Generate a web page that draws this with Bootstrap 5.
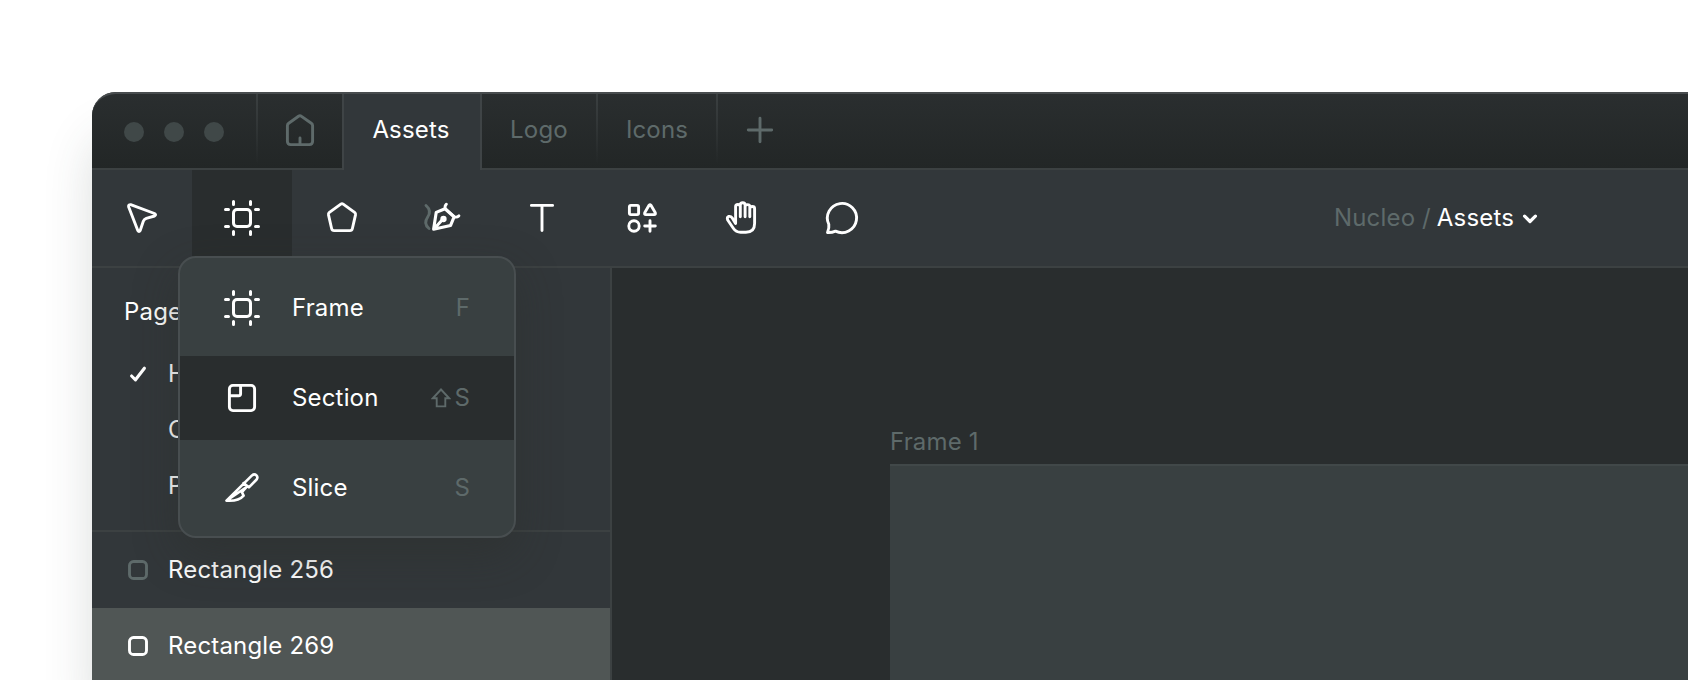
<!DOCTYPE html>
<html lang="en">
<head>
<meta charset="utf-8">
<title>Assets</title>
<meta name="viewport" content="width=device-width, initial-scale=1">
<link href="https://cdn.jsdelivr.net/npm/bootstrap@5.3.0/dist/css/bootstrap.min.css" rel="stylesheet">
<style>
  body { font-family: Inter, "Liberation Sans", sans-serif; font-size: 24px; font-weight: 400; line-height: 32px; background: #fff; color: #fff; letter-spacing: .17px; }
  svg { display: block; fill: none; stroke: currentColor; stroke-width: 2.9; stroke-linecap: round; stroke-linejoin: round; flex: none; }
  .stage { height: 680px; padding: 92px 0 0 92px; }
  .app-window { height: 592px; border-top-left-radius: 24px; background: #292d2e; box-shadow: 0 44px 52px -4px rgba(50,66,62,.2); }
  .dim { color: #5e6a6a; }
  .titlebar { height: 78px; border-top: 2px solid #484c4e; background: linear-gradient(#2a2e2f, #222626); border-top-left-radius: 24px; }
  .tab { border-bottom: 2px solid #3c4142; position: relative; padding-bottom: 2px; }
  .lights { width: 166px; padding: 2px 0 0 32px; gap: 20px; }
  .light { width: 20px; height: 20px; border-radius: 50%; background: #404848; }
  .tab-home { width: 84px; }
  .tab-assets { width: 140px; padding-right: 2px; }
  .tab-logo { width: 116px; padding-right: 2px; }
  .tab-icons { width: 120px; padding-right: 2px; }
  .tab-new { padding-left: 18px; }
  .tab-fade::after { content: ""; position: absolute; right: 0; top: 0; width: 2px; height: 70px; background: linear-gradient(#3a3f40, rgba(58,63,64,0)); }
  .tab-on { background: #32373a; border-left: 2px solid #3f4446; border-right: 2px solid #3f4446; border-bottom: 0; padding-bottom: 4px; }
  .toolbar { height: 98px; background: #32373a; border-bottom: 2px solid #3c4142; }
  .tool { width: 100px; }
  .tool.active { background: #292d2e; }
  .crumbs { width: 354px; }
  .crumbs .current { margin-left: -1px; }
  .crumbs svg { margin-left: 7px; }
  .side { width: 520px; background: #32373a; border-right: 2px solid #3c4142; }
  .pages { height: 264px; border-bottom: 2px solid #3c4142; padding: 28px 32px 0; }
  .title-row { margin-bottom: 18px; }
  .page-row { height: 56px; }
  .mark-col { width: 44px; }
  .layer { height: 76px; padding-left: 36px; gap: 20px; }
  .layer.active { background: #505655; }
  .frame-label { padding: 158px 0 6px 278px; }
  .artboard { margin-left: 278px; background: #394041; border-top: 2px solid #414849; }
  .frame-menu { left: 178px; top: 256px; width: 338px; height: 282px; background: #394041; border: 2px solid #484e50; border-radius: 18px; padding: 8px 0 6px; box-shadow: 0 16px 44px rgba(42,46,40,.42); gap: 6px; }
  .menu-line { height: 84px; padding: 0 44px 0 38px; flex: none; }
  .menu-line.active { background: #292d2e; }
  .menu-line .ico { margin-right: 26px; }
  .keys { gap: 3px; }
</style>
</head>
<body class="overflow-hidden">
<svg width="0" height="0" class="position-absolute">
  <symbol id="frame" viewBox="0 0 48 48"><g stroke-width="3"><rect x="15.5" y="15.5" width="17" height="17" rx="3.500"/><path d="M15.500 7.500v3M32.500 7.500v3M15.500 37.500v3M32.500 37.500v3M7.500 15.500h3M7.500 32.500h3M37.500 15.500h3M37.500 32.500h3"/></g></symbol>
</svg>
<div class="stage">
  <main class="app-window d-flex flex-column">
    <header class="titlebar d-flex flex-shrink-0">
      <div class="tab lights tab-fade d-flex align-items-center flex-shrink-0">
        <span class="light"></span><span class="light"></span><span class="light"></span>
      </div>
      <div class="tab tab-home d-flex align-items-center justify-content-center dim">
        <svg width="48" height="48" viewBox="0 0 48 48"><path d="M11.400 19.800q0-1.600 1.300-2.500l9.800-7q1.500-1.100 3 0l9.800 7q1.300.9 1.300 2.500v15.500q0 3.300-3.300 3.300H14.700q-3.300 0-3.300-3.300zM24 32v5.500"/></svg>
      </div>
      <div class="tab tab-on tab-assets d-flex align-items-center justify-content-center">Assets</div>
      <div class="tab tab-fade tab-logo d-flex align-items-center justify-content-center dim">Logo</div>
      <div class="tab tab-fade tab-icons d-flex align-items-center justify-content-center dim">Icons</div>
      <div class="tab tab-new flex-grow-1 d-flex align-items-center dim">
        <svg width="48" height="48" viewBox="0 0 48 48"><path d="M24 12.300v23.400M12.300 24h23.400"/></svg>
      </div>
    </header>
    <nav class="toolbar d-flex align-items-stretch flex-shrink-0">
      <div class="tool d-flex align-items-center justify-content-center"><svg width="48" height="48" viewBox="0 0 48 48"><path d="M12.700 10.600l23.800 8.900q2.200 1.200 0 2.500l-8.200 2.300q-2.200.8-3 3l-3.100 9.200q-1.200 2-2.400 0L10.600 12.700q-.3-2.200 2.100-2.100z"/></svg></div>
      <div class="tool active d-flex align-items-center justify-content-center"><svg width="48" height="48"><use href="#frame"/></svg></div>
      <div class="tool d-flex align-items-center justify-content-center"><svg width="48" height="48" viewBox="0 0 48 48"><path d="M22.800 10.100q1.200-.8 2.400 0l11.400 8.300q1.200 1 .9 2.500l-3.100 13.600q-.5 2.100-2.500 2.100H16.100q-2 0-2.500-2.100l-3.100-13.600q-.3-1.500.9-2.500z"/></svg></div>
      <div class="tool d-flex align-items-center justify-content-center"><svg width="48" height="48" viewBox="0 0 48 48"><path class="dim" d="M8 11.500c4.500 4 4.500 7.500 1.700 11.500s-3 8 1.300 11.500"/><path d="M28.400 10.200q-1.800 1.500-1.200 4.300l9.200 8.300q2.400.9 4.500-1" /><path stroke-width="3.100" d="M27 14.800l-8.800 3.600-2.600 16.900 16.900-3.700 3.600-8.800zM16 35l9-10"/><circle cx="25.500" cy="25" r="1.700"/></svg></div>
      <div class="tool d-flex align-items-center justify-content-center"><svg width="48" height="48" viewBox="0 0 48 48"><path d="M13.400 11.400h21.200M24 11.400v25.200"/></svg></div>
      <div class="tool d-flex align-items-center justify-content-center"><svg width="48" height="48" viewBox="0 0 48 48"><rect x="11.400" y="11.400" width="9.200" height="9.200" rx="1.500"/><path d="M31.200 11.100q.8-1 1.600 0l4.500 7.700q.5 1.800-1.200 1.800h-8.200q-1.700 0-1.200-1.800zM32 26.700v10.600M26.700 32h10.600"/><circle cx="16" cy="32" r="5.200"/></svg></div>
      <div class="tool d-flex align-items-center justify-content-center"><svg width="48" height="48" viewBox="0 0 48 48"><path d="M17.600 29.500V12.600q0-2.100 2.300-2.100t2.400 2.100v10.200V11q0-2.200 2.400-2.200T27.100 11v11.800V12.600q0-2 2.400-2t2.300 2v10.200V14.500q0-2 2.400-2t2.400 2V29.500q0 8.700-8.700 8.700h-5.300q-4.600 0-7.300-4L9.700 26q-1-2.700.8-3.500 2.200-.6 3.900 1.700l3.200 5.300"/></svg></div>
      <div class="tool d-flex align-items-center justify-content-center"><svg width="48" height="48" viewBox="0 0 48 48"><path d="M9.500 38.500q1.900-4.200 1.300-8.200A14.600 14.600 0 1 1 17.500 37.100q-4 1.700-8 1.400z"/></svg></div>
      <div class="crumbs ms-auto d-flex align-items-center"><span class="dim">Nucleo /&nbsp;</span><span class="current">Assets</span>
        <svg width="18" height="18" viewBox="0 0 18 18"><path stroke-width="3.200" d="M3.600 7.200L9 12.500l5.400-5.300"/></svg></div>
    </nav>
    <section class="d-flex flex-grow-1">
      <aside class="side flex-shrink-0">
        <div class="pages">
          <div class="title-row">Page</div>
          <div class="page-row d-flex align-items-center"><span class="mark-col ps-1"><svg width="20" height="20" viewBox="0 0 20 20"><path stroke-width="3.100" d="M3.600 12l3.900 3.800L16.400 4.200"/></svg></span>H</div>
          <div class="page-row d-flex align-items-center"><span class="mark-col"></span>C</div>
          <div class="page-row d-flex align-items-center"><span class="mark-col"></span>P</div>
        </div>
        <div class="layer d-flex align-items-center"><svg class="dim" width="20" height="20" viewBox="0 0 20 20"><rect x="1.500" y="1.500" width="17" height="17" rx="4"/></svg><span>Rectangle 256</span></div>
        <div class="layer active d-flex align-items-center"><svg width="20" height="20" viewBox="0 0 20 20"><rect x="1.500" y="1.500" width="17" height="17" rx="4"/></svg><span>Rectangle 269</span></div>
      </aside>
      <div class="flex-grow-1 d-flex flex-column">
        <div class="dim frame-label">Frame 1</div>
        <div class="artboard flex-grow-1"></div>
      </div>
    </section>
  </main>
</div>
<div class="frame-menu position-absolute d-flex flex-column">
  <div class="menu-line d-flex align-items-center"><svg class="ico" width="48" height="48"><use href="#frame"/></svg><span>Frame</span><span class="dim ms-auto">F</span></div>
  <div class="menu-line active d-flex align-items-center"><svg class="ico" width="48" height="48" viewBox="0 0 48 48"><rect x="11.400" y="11.400" width="25.200" height="25.200" rx="3.500"/><path d="M22.600 11.400v8.400q0 2-2 2h-9.200"/></svg><span>Section</span>
    <span class="keys dim ms-auto d-flex align-items-center"><svg width="20" height="20" viewBox="0 0 20 20"><path stroke-width="1.900" stroke-linejoin="miter" d="M10 1.500L18.200 10.300h-3.900V18.400H5.700V10.300H1.800z"/></svg><span>S</span></span></div>
  <div class="menu-line d-flex align-items-center"><svg class="ico" width="48" height="48" viewBox="0 0 48 48"><path stroke-width="2.600" d="M8.500 36.700L34 11.400q2.300-2 4.300-.2t.3 4.300L30.900 23.300l-5.400-4.200M28.200 23.300l-4.300 4.900 1.700 3.400Q20.500 37.600 8.500 36.700z"/></svg><span>Slice</span><span class="dim ms-auto">S</span></div>
</div>
<script src="https://cdn.jsdelivr.net/npm/bootstrap@5.3.0/dist/js/bootstrap.bundle.min.js"></script>
</body>
</html>
